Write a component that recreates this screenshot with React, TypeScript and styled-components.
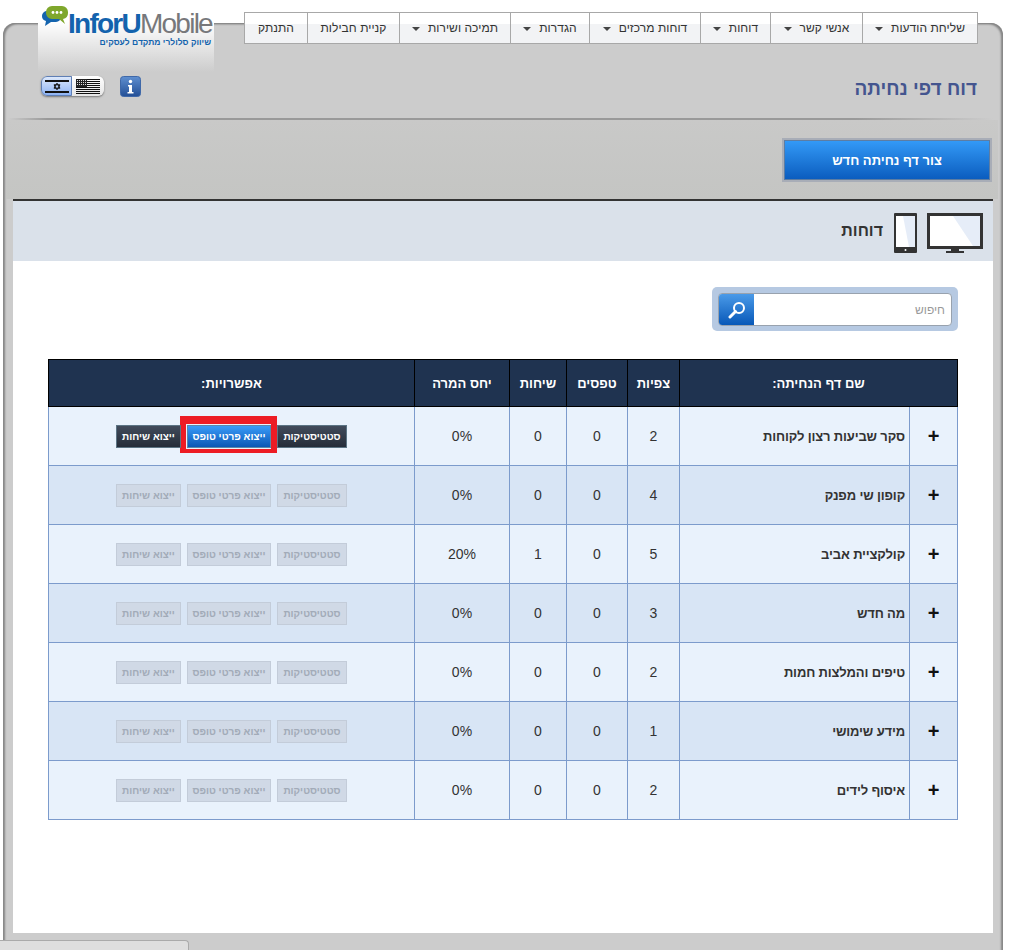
import React from 'react';
import styled, { createGlobalStyle } from 'styled-components';

const Global = createGlobalStyle`
  html, body { margin: 0; padding: 0; background: #fff; overflow: hidden; }
  body { font-family: "Liberation Sans", Arial, sans-serif; direction: rtl; }
  * { box-sizing: border-box; }
`;

const Page = styled.div`
  position: relative;
  width: 1011px;
  height: 950px;
  overflow: hidden;
  padding-top: 23px;
`;

const TopStrip = styled.header`
  position: absolute;
  top: 0;
  left: 38px;
  right: 33px;
  display: flex;
  justify-content: space-between;
  align-items: flex-start;
  z-index: 2;
`;

const Nav = styled.nav`
  display: flex;
  margin-top: 12px;
  height: 32px;
  border: 1px solid #a8a8a8;
  background: linear-gradient(#fff 0, #fff 37%, #f2f3f5 38%, #f2f3f5 100%);
`;

const NavItem = styled.div<{ $w: number }>`
  width: ${p => p.$w}px;
  display: flex;
  align-items: center;
  justify-content: center;
  gap: 8px;
  font-size: 12px;
  letter-spacing: 0.05px;
  color: #333;
  white-space: nowrap;
  border-left: 1px solid #a8a8a8;
  &:last-child { border-left: 0; }
`;

const Caret = styled.span`
  width: 0;
  height: 0;
  border-left: 4px solid transparent;
  border-right: 4px solid transparent;
  border-top: 4px solid #444;
  margin-top: 2px;
`;

const LogoBox = styled.div`
  width: 176px;
  height: 72px;
  padding: 0 3px 0 0;
  background: linear-gradient(#fff 0, #fff 30%, #ccc 100%);
  position: relative;
  direction: ltr;
`;

const Bubbles = styled.svg`
  position: absolute;
  left: 1px;
  top: 5px;
`;

const LogoWord = styled.div`
  padding: 10px 0 0 30px;
  font-size: 28px;
  line-height: 27px;
  letter-spacing: -1.75px;
  white-space: nowrap;
`;

const LogoBlue = styled.span`
  color: #1363ad;
  font-weight: bold;
`;

const LogoGray = styled.span`
  color: #77787b;
`;

const LogoTag = styled.div`
  direction: rtl;
  text-align: right;
  font-size: 8.5px;
  line-height: 11px;
  font-weight: bold;
  color: #1363ad;
`;

const Frame = styled.main`
  position: relative;
  width: 1000px;
  height: 927px;
  margin-right: 8px;
  border-radius: 12px 12px 0 0;
  background: #ccc;
  box-shadow: inset 3px 2px 2px -1px #858585, inset -3px 2px 2px -1px #858585;
`;

const TitleBar = styled.div`
  height: 97px;
  margin: 0 10px 0 5px;
  padding: 53px 16px 0 33px;
  display: flex;
  justify-content: space-between;
  align-items: flex-start;
  background: linear-gradient(to right, #ccc, #999 4%, #999 86%, #ccc) bottom / 100% 2px no-repeat;
`;

const PageTitle = styled.h1`
  margin: 2px 0 0;
  font-size: 19px;
  line-height: 22px;
  font-weight: bold;
  color: #44558f;
`;

const Controls = styled.div`
  display: flex;
  gap: 16px;
`;

const LangGroup = styled.div`
  display: flex;
  flex-direction: row-reverse;
  height: 20px;
  border-radius: 6px;
  box-shadow: 0 1px 2px #777;
  overflow: hidden;
`;

const LangButton = styled.div<{ $active?: boolean; $w: number }>`
  width: ${p => p.$w}px;
  display: flex;
  align-items: center;
  justify-content: center;
  background: ${p => (p.$active ? 'linear-gradient(#dce8fb, #8fb4f4)' : 'linear-gradient(#fff, #e6e6e6)')};
  border: ${p => (p.$active ? '1px solid #5f7fb5' : '0')};
  border-radius: ${p => (p.$active ? '6px 0 0 6px' : '0 6px 6px 0')};
`;

const InfoIcon = styled.svg`
  display: block;
`;

const ActionBand = styled.div`
  height: 79px;
  margin: 0 5px 0 3px;
  padding: 18px 6px 0 0;
  background: linear-gradient(#c9c9c8, #c4c5c3);
`;

const NewPageButton = styled.button`
  display: block;
  width: 210px;
  height: 44px;
  padding: 0;
  border: 2px solid #a8adb7;
  outline: 1px solid #5d7da3;
  outline-offset: -3px;
  background: linear-gradient(#349bf8, #0a5bbd);
  color: #fff;
  font: bold 13px "Liberation Sans", Arial, sans-serif;
`;

const Panel = styled.section`
  height: 734px;
  margin: 0 10px;
  border-top: 2px solid #333;
  background: #fff;
`;

const ReportBand = styled.div`
  height: 60px;
  padding: 12px 10px 0 0;
  display: flex;
  align-items: flex-start;
  background: #dae1ea;
`;

const DeviceIcon = styled.svg<{ $gap: number }>`
  display: block;
  margin-left: ${p => p.$gap}px;
  flex: none;
`;

const ReportTitle = styled.h2`
  margin: 0;
  height: 36px;
  line-height: 36px;
  font-size: 16px;
  font-weight: bold;
  color: #333;
`;

const SearchBox = styled.form`
  width: 246px;
  height: 44px;
  margin: 26px 35px 0 auto;
  padding: 6px;
  border-radius: 5px;
  background: #b6c9e2;
`;

const SearchInner = styled.div`
  display: flex;
  height: 33px;
  border: 1px solid #98a2ae;
  border-radius: 4px;
  background: #fff;
  overflow: hidden;
`;

const SearchInput = styled.input`
  flex: 1;
  min-width: 0;
  border: 0;
  outline: 0;
  padding: 0 6px 0 0;
  direction: rtl;
  background: transparent;
  font: 12px "Liberation Sans", Arial, sans-serif;
  &::placeholder { color: #999; opacity: 1; }
`;

const SearchButton = styled.div`
  width: 35px;
  display: flex;
  align-items: center;
  justify-content: center;
  background: linear-gradient(#4a9ae8, #0858b8);
`;

const Table = styled.table`
  width: 909px;
  margin: 28px 35px 0;
  border-collapse: collapse;
  table-layout: fixed;
`;

const Th = styled.th`
  height: 47px;
  padding: 0;
  background: #1f3350;
  border: 1px solid #000;
  color: #fff;
  font-size: 13px;
  font-weight: bold;
  text-align: center;
`;

const Row = styled.tr<{ $alt: boolean }>`
  height: 59px;
  background: ${p => (p.$alt ? '#d8e5f5' : '#e9f2fc')};
`;

const Td = styled.td`
  padding: 0;
  border: 1px solid #7c9bcc;
  font-size: 14px;
  color: #333;
  text-align: center;
`;

const PlusCell = styled(Td)`
  font-size: 20px;
  font-weight: bold;
  color: #111;
`;

const NameCell = styled(Td)`
  padding-right: 4px;
  font-size: 13px;
  letter-spacing: -0.15px;
  font-weight: bold;
  text-align: right;
`;

const Options = styled.div`
  display: flex;
  justify-content: center;
  gap: 6px;
`;

const ActionButton = styled.div<{ $w: number; $kind: 'dark' | 'blue' | 'off' }>`
  position: relative;
  width: ${p => p.$w}px;
  height: 23px;
  display: flex;
  align-items: center;
  justify-content: center;
  font-size: 10px;
  font-weight: bold;
  white-space: nowrap;
  color: ${p => (p.$kind === 'off' ? '#a2abb8' : '#fff')};
  border: 1px solid ${p => (p.$kind === 'off' ? '#c3ccd9' : p.$kind === 'blue' ? '#5b88a8' : '#5b7484')};
  background: ${p =>
    p.$kind === 'off'
      ? '#d0d9e6'
      : p.$kind === 'blue'
        ? 'linear-gradient(#3a9bf8, #0a57b5)'
        : 'linear-gradient(#414b5a, #252d3a)'};
`;

const Highlight = styled.span`
  position: absolute;
  top: -10px;
  bottom: -6px;
  left: -8px;
  right: -7px;
  border-style: solid;
  border-color: #ed1c24;
  border-width: 8px 6px 4px 6px;
`;

const BottomTab = styled.div`
  position: absolute;
  left: 0;
  bottom: 0;
  width: 189px;
  height: 10px;
  background: #dedede;
  border-top: 1px solid #aaa;
  border-right: 1px solid #aaa;
  border-top-right-radius: 4px;
`;

const menu: { label: string; w: number; caret?: boolean }[] = [
  { label: 'שליחת הודעות', w: 115, caret: true },
  { label: 'אנשי קשר', w: 92, caret: true },
  { label: 'דוחות', w: 70, caret: true },
  { label: 'דוחות מרכזים', w: 111, caret: true },
  { label: 'הגדרות', w: 79, caret: true },
  { label: 'תמיכה ושירות', w: 111, caret: true },
  { label: 'קניית חבילות', w: 92 },
  { label: 'התנתק', w: 62 },
];

const rows = [
  { name: 'סקר שביעות רצון לקוחות', views: 2, forms: 0, chats: 0, rate: '0%' },
  { name: 'קופון שי מפנק', views: 4, forms: 0, chats: 0, rate: '0%' },
  { name: 'קולקציית אביב', views: 5, forms: 0, chats: 1, rate: '20%' },
  { name: 'מה חדש', views: 3, forms: 0, chats: 0, rate: '0%' },
  { name: 'טיפים והמלצות חמות', views: 2, forms: 0, chats: 0, rate: '0%' },
  { name: 'מידע שימושי', views: 1, forms: 0, chats: 0, rate: '0%' },
  { name: 'איסוף לידים', views: 2, forms: 0, chats: 0, rate: '0%' },
];

const IsraelFlag = () => (
  <svg width="24" height="13" viewBox="0 0 24 13">
    <rect x="0" y="0" width="24" height="2" fill="#111" />
    <rect x="0" y="11" width="24" height="2" fill="#111" />
    <path d="M12 3.2 15 8.2H9ZM12 9.8 9 4.8H15Z" fill="none" stroke="#111" strokeWidth="1" />
  </svg>
);

const UsFlag = () => (
  <svg width="24" height="15" viewBox="0 0 24 15">
    {[0, 2, 4, 6, 8, 10, 12, 14].map(y => (
      <rect key={y} x="0" y={y} width="24" height="1" fill="#111" />
    ))}
    <rect x="0" y="0" width="11" height="8" fill="#222" />
    {[1, 3, 5, 7, 9].map(x =>
      [1, 3, 5].map(y => <rect key={`${x}-${y}`} x={x} y={y} width="1" height="1" fill="#ddd" />),
    )}
  </svg>
);

export default function App() {
  return (
    <Page>
      <Global />
      <TopStrip>
        <Nav>
          {menu.map(m => (
            <NavItem key={m.label} $w={m.w}>
              <span>{m.label}</span>
              {m.caret && <Caret />}
            </NavItem>
          ))}
        </Nav>
        <LogoBox>
          <Bubbles width="30" height="22" viewBox="0 0 30 22">
            <path d="M8 6h9a5 5 0 0 1 5 5v1a5 5 0 0 1-5 5h-5l-6 4 1-5a5 5 0 0 1-4-5v-0a5 5 0 0 1 5-5z" fill="#1464ae" />
            <path d="M13 1h10a6 6 0 0 1 6 6v1a6 6 0 0 1-5 6l2 5-6-5h-7a6 6 0 0 1-6-6V7a6 6 0 0 1 6-6z" fill="#7fa72c" />
            <circle cx="14" cy="7.5" r="1.4" fill="#fff" />
            <circle cx="18" cy="7.5" r="1.4" fill="#fff" />
            <circle cx="22" cy="7.5" r="1.4" fill="#fff" />
          </Bubbles>
          <LogoWord>
            <LogoBlue>InforU</LogoBlue>
            <LogoGray>Mobile</LogoGray>
          </LogoWord>
          <LogoTag>שיווק סלולרי מתקדם לעסקים</LogoTag>
        </LogoBox>
      </TopStrip>

      <Frame>
        <TitleBar>
          <PageTitle>דוח דפי נחיתה</PageTitle>
          <Controls>
            <InfoIcon width="21" height="21" viewBox="0 0 21 21">
              <defs>
                <linearGradient id="info" x1="0" y1="0" x2="0" y2="1">
                  <stop offset="0" stopColor="#5f8fd0" />
                  <stop offset="1" stopColor="#234f96" />
                </linearGradient>
              </defs>
              <rect x="0.5" y="0.5" width="20" height="20" rx="3" fill="url(#info)" stroke="#3f68a8" />
              <circle cx="10.5" cy="5.5" r="1.7" fill="#fff" />
              <path d="M8 9h4v7h1.5v1.5h-6V16H9v-5.5H8z" fill="#fff" />
            </InfoIcon>
            <LangGroup>
              <LangButton $active $w={31}><IsraelFlag /></LangButton>
              <LangButton $w={32}><UsFlag /></LangButton>
            </LangGroup>
          </Controls>
        </TitleBar>

        <ActionBand>
          <NewPageButton type="button">צור דף נחיתה חדש</NewPageButton>
        </ActionBand>

        <Panel>
          <ReportBand>
            <DeviceIcon $gap={10} width="56" height="40" viewBox="0 0 56 40">
              <rect x="1.5" y="1.5" width="53" height="33" fill="#fff" stroke="#333" strokeWidth="3" />
              <path d="M26 3h27v30H46Z" fill="#e6edf8" />
              <rect x="24" y="36" width="8" height="2" fill="#333" />
              <rect x="19" y="38" width="18" height="2" fill="#333" />
            </DeviceIcon>
            <DeviceIcon $gap={11} width="23" height="40" viewBox="0 0 23 40">
              <rect x="0" y="0" width="23" height="40" rx="1" fill="#333" />
              <rect x="2" y="3" width="19" height="31" fill="#fff" />
              <path d="M9 3h12v31h-6Z" fill="#e6edf8" />
              <circle cx="11.5" cy="37" r="1" fill="#fff" />
            </DeviceIcon>
            <ReportTitle>דוחות</ReportTitle>
          </ReportBand>

          <SearchBox>
            <SearchInner>
              <SearchInput placeholder="חיפוש" />
              <SearchButton>
                <svg width="18" height="18" viewBox="0 0 18 18">
                  <circle cx="11" cy="7" r="5" fill="none" stroke="#fff" strokeWidth="2" />
                  <path d="M7.5 10.5 2 16" stroke="#fff" strokeWidth="3" strokeLinecap="round" />
                </svg>
              </SearchButton>
            </SearchInner>
          </SearchBox>

          <Table>
            <colgroup>
              <col width="48" />
              <col width="230" />
              <col width="52" />
              <col width="61" />
              <col width="57" />
              <col width="95" />
              <col width="366" />
            </colgroup>
            <thead>
              <tr>
                <Th colSpan={2}>שם דף הנחיתה:</Th>
                <Th>צפיות</Th>
                <Th>טפסים</Th>
                <Th>שיחות</Th>
                <Th>יחס המרה</Th>
                <Th>אפשרויות:</Th>
              </tr>
            </thead>
            <tbody>
              {rows.map((r, i) => {
                const kind = i === 0 ? 'dark' : 'off';
                return (
                  <Row key={r.name} $alt={i % 2 === 1}>
                    <PlusCell>+</PlusCell>
                    <NameCell>{r.name}</NameCell>
                    <Td>{r.views}</Td>
                    <Td>{r.forms}</Td>
                    <Td>{r.chats}</Td>
                    <Td>{r.rate}</Td>
                    <Td>
                      <Options>
                        <ActionButton $w={70} $kind={kind}>סטטיסטיקות</ActionButton>
                        <ActionButton $w={84} $kind={i === 0 ? 'blue' : 'off'}>
                          ייצוא פרטי טופס
                          {i === 0 && <Highlight />}
                        </ActionButton>
                        <ActionButton $w={65} $kind={kind}>ייצוא שיחות</ActionButton>
                      </Options>
                    </Td>
                  </Row>
                );
              })}
            </tbody>
          </Table>
        </Panel>
      </Frame>
      <BottomTab />
    </Page>
  );
}
